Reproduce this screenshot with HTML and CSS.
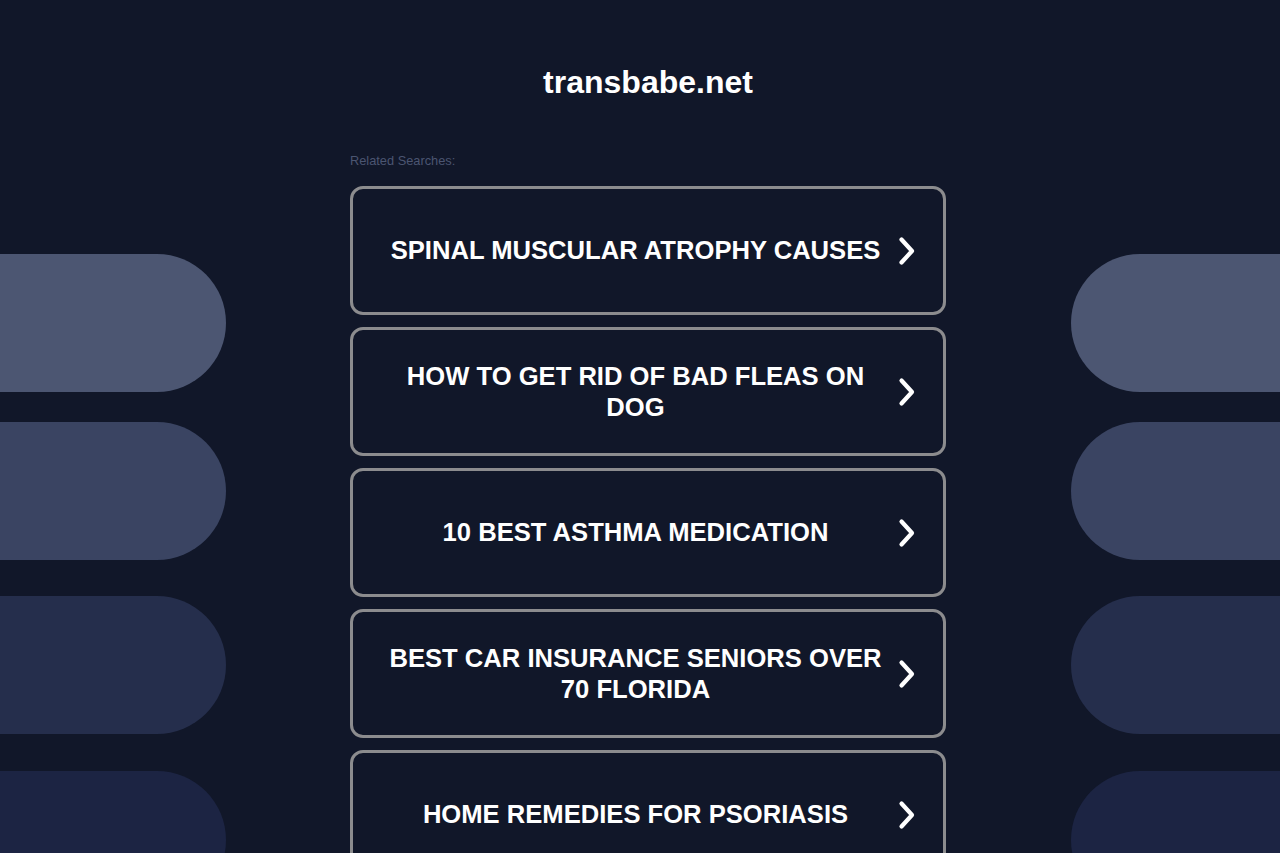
FILE: index.html
```html
<!DOCTYPE html>
<html lang="en">
<head>
<meta charset="utf-8">
<title>transbabe.net</title>
<link rel="stylesheet" href="styles.css">
</head>
<body>
<div class="page">
  <div class="decor decor-left">
    <div class="pill pill-1"></div>
    <div class="pill pill-2"></div>
    <div class="pill pill-3"></div>
    <div class="pill pill-4"></div>
  </div>
  <main class="main">
    <h1 class="domain">transbabe.net</h1>
    <div class="related">Related Searches:</div>
    <div class="links">
      <a class="card" href="#"><span class="card-text">SPINAL MUSCULAR ATROPHY CAUSES</span><svg class="chev" viewBox="0 0 20 32" width="20" height="32"><path d="M4.5 4.5 L15 16 L4.5 27.5" fill="none" stroke="#fff" stroke-width="4.2" stroke-linecap="round" stroke-linejoin="round"/></svg></a>
      <a class="card" href="#"><span class="card-text">HOW TO GET RID OF BAD FLEAS ON DOG</span><svg class="chev" viewBox="0 0 20 32" width="20" height="32"><path d="M4.5 4.5 L15 16 L4.5 27.5" fill="none" stroke="#fff" stroke-width="4.2" stroke-linecap="round" stroke-linejoin="round"/></svg></a>
      <a class="card" href="#"><span class="card-text">10 BEST ASTHMA MEDICATION</span><svg class="chev" viewBox="0 0 20 32" width="20" height="32"><path d="M4.5 4.5 L15 16 L4.5 27.5" fill="none" stroke="#fff" stroke-width="4.2" stroke-linecap="round" stroke-linejoin="round"/></svg></a>
      <a class="card" href="#"><span class="card-text">BEST CAR INSURANCE SENIORS OVER 70 FLORIDA</span><svg class="chev" viewBox="0 0 20 32" width="20" height="32"><path d="M4.5 4.5 L15 16 L4.5 27.5" fill="none" stroke="#fff" stroke-width="4.2" stroke-linecap="round" stroke-linejoin="round"/></svg></a>
      <a class="card" href="#"><span class="card-text">HOME REMEDIES FOR PSORIASIS</span><svg class="chev" viewBox="0 0 20 32" width="20" height="32"><path d="M4.5 4.5 L15 16 L4.5 27.5" fill="none" stroke="#fff" stroke-width="4.2" stroke-linecap="round" stroke-linejoin="round"/></svg></a>
    </div>
  </main>
  <div class="decor decor-right">
    <div class="pill pill-1"></div>
    <div class="pill pill-2"></div>
    <div class="pill pill-3"></div>
    <div class="pill pill-4"></div>
  </div>
</div>
</body>
</html>
```
FILE: styles.css
```css
html, body {
  margin: 0;
  padding: 0;
  background: #111729;
  font-family: "Liberation Sans", Arial, sans-serif;
  height: 100%;
  overflow: hidden;
}

.page {
  display: flex;
  align-items: flex-start;
  width: 1280px;
}

.decor {
  display: flex;
  flex-direction: column;
  padding-top: 254px;
}

.decor-left {
  width: 226px;
}

.decor-right {
  width: 209px;
  margin-left: 125px;
}

.pill {
  height: 138px;
}

.decor-left .pill {
  border-radius: 0 69px 69px 0;
}

.decor-right .pill {
  border-radius: 69px 0 0 69px;
}

.pill-1 { background: #4c5672; }
.pill-2 { background: #3a4462; margin-top: 30px; }
.pill-3 { background: #252e4c; margin-top: 36px; }
.pill-4 { background: #1c2443; margin-top: 37px; }

.main {
  width: 596px;
  margin-left: 124px;
  padding-top: 64px;
}

.domain {
  margin: 0;
  text-align: center;
  color: #ffffff;
  font-size: 32px;
  line-height: 37px;
  font-weight: bold;
}

.related {
  margin-top: 53px;
  color: #4b5571;
  font-size: 12.8px;
  line-height: 14px;
}

.links {
  margin-top: 18px;
  display: flex;
  flex-direction: column;
  gap: 12px;
}

.card {
  display: flex;
  align-items: center;
  height: 129px;
  box-sizing: border-box;
  border: 3px solid #8c8c8e;
  border-radius: 13px;
  padding: 0 26px 0 32px;
  text-decoration: none;
  color: #ffffff;
}

.card-text {
  flex: 1;
  text-align: center;
  font-size: 25.6px;
  line-height: 31px;
  font-weight: bold;
}

.chev {
  flex: none;
  margin-left: 11px;
}
```
